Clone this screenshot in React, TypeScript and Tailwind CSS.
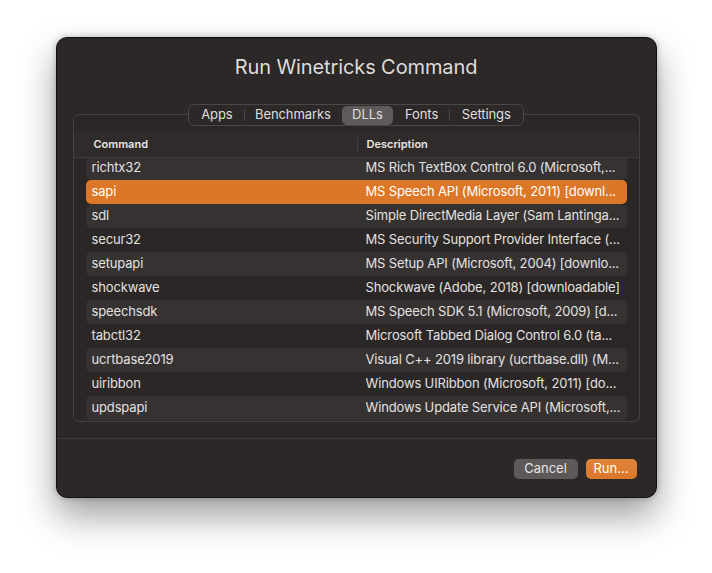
import React from "react";

const rows: [string, string][] = [
  ["richtx32", "MS Rich TextBox Control 6.0 (Microsoft,..."],
  ["sapi", "MS Speech API (Microsoft, 2011) [downl..."],
  ["sdl", "Simple DirectMedia Layer (Sam Lantinga..."],
  ["secur32", "MS Security Support Provider Interface (..."],
  ["setupapi", "MS Setup API (Microsoft, 2004) [downlo..."],
  ["shockwave", "Shockwave (Adobe, 2018) [downloadable]"],
  ["speechsdk", "MS Speech SDK 5.1 (Microsoft, 2009) [d..."],
  ["tabctl32", "Microsoft Tabbed Dialog Control 6.0 (ta..."],
  ["ucrtbase2019", "Visual C++ 2019 library (ucrtbase.dll) (M..."],
  ["uiribbon", "Windows UIRibbon (Microsoft, 2011) [do..."],
  ["updspapi", "Windows Update Service API (Microsoft,..."],
];

const tabs = ["Apps", "Benchmarks", "DLLs", "Fonts", "Settings"];

export default function App() {
  return (
    <div
      className="w-[712px] h-[573px] bg-white flex justify-center pt-[37px]"
      style={{ fontFamily: "Inter, 'Noto Sans', sans-serif" }}
    >
      <div className="w-[601px] h-[461px] rounded-[11px] border border-[#111] bg-[#2b2827] shadow-[0_18px_36px_rgba(0,0,0,0.38),0_0_6px_rgba(0,0,0,0.25)] flex flex-col">
        <div className="pt-[17px] h-[41px] text-center text-[20px] leading-[24px] text-[#dedcdb] tracking-[-0.1px]">
          Run Winetricks Command
        </div>
        <div className="mt-[25px] flex justify-center relative z-10">
          <div className="h-[22px] w-[336px] rounded-[6px] border border-[#4a4746] bg-[#2b2827] flex items-center px-[1px] text-[13px] text-[#e0dedd] tracking-[-0.1px]">
            {tabs.map((t, i) => {
              const sel = t === "DLLs";
              const showSep = i > 0 && !sel && tabs[i - 1] !== "DLLs" && i !== 3;
              return (
                <React.Fragment key={t}>
                  {i > 0 && (
                    <div
                      className={
                        showSep ? "w-px h-[12px] bg-[#4a4746]" : "w-px h-[12px]"
                      }
                    />
                  )}
                  <div
                    className={
                      sel
                        ? "h-[19px] rounded-[5px] bg-[#5d5a59] flex items-center justify-center px-[9px]"
                        : "h-[19px] flex items-center justify-center px-[10px]"
                    }
                    style={
                      {
                        Apps: { width: 54 },
                        Benchmarks: { width: 97 },
                        DLLs: { width: 51 },
                        Fonts: { width: 56 },
                        Settings: { width: 72 },
                      }[t]
                    }
                  >
                    {t}
                  </div>
                </React.Fragment>
              );
            })}
          </div>
        </div>
        <div className="-mt-[12px] mx-[16px] h-[308px] rounded-[6px] border border-[#43403f] bg-[#2a2726] pt-[16px] flex flex-col overflow-hidden">
          <div className="h-[27px] mr-[1px] bg-[#2e2b2a] border-b border-[#3f3c3b] flex items-center pt-[1px] text-[11px] font-semibold text-[#e6e4e3] shrink-0">
            <div className="w-[284px] pl-[20px] flex items-center justify-between h-full">
              <span>Command</span>
              <div className="w-px h-[16px] bg-[#43403f]" />
            </div>
            <div className="pl-[9px]">Description</div>
          </div>
          <div className="flex-1 overflow-hidden px-[12px] relative">
            <div className="-mt-[2px] flex flex-col">
              {rows.map(([c, d], i) => {
                const sel = c === "sapi";
                const bg = sel
                  ? "bg-[#dc7727] text-white"
                  : i % 2 === 0
                  ? "bg-[#353231] text-[#e3e1e0]"
                  : "text-[#e3e1e0]";
                return (
                  <div
                    key={c}
                    className={`h-[24px] rounded-[5px] flex items-center text-[13px] tracking-[-0.15px] ${bg}`}
                  >
                    <div className="w-[280px] pl-[6px] whitespace-nowrap overflow-hidden">
                      {c}
                    </div>
                    <div className="flex-1 whitespace-nowrap overflow-hidden pr-[4px]">
                      {d}
                    </div>
                  </div>
                );
              })}
            </div>
          </div>
        </div>
        <div className="mt-[16px] h-px bg-[#3d3a39]" />
        <div className="mt-[20px] flex justify-end gap-[8px] pr-[19px] text-[13px]">
          <button className="h-[20px] w-[64px] rounded-[5px] bg-[#5c5958] text-[#e6e4e3] flex items-center justify-center">
            Cancel
          </button>
          <button className="h-[20px] w-[51px] rounded-[5px] bg-gradient-to-b from-[#e0843a] to-[#d9772a] text-white flex items-center justify-center">
            Run...
          </button>
        </div>
      </div>
    </div>
  );
}
